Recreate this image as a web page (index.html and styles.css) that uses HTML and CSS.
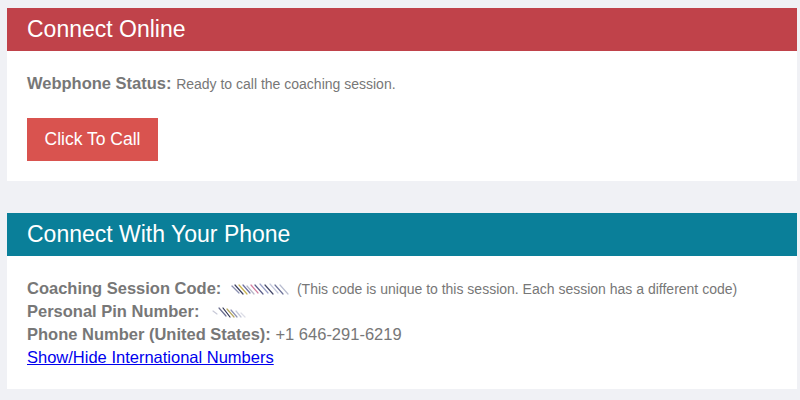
FILE: index.html
```html
<!DOCTYPE html>
<html>
<head>
<meta charset="utf-8">
<link rel="stylesheet" href="styles.css">
</head>
<body>
<div class="page">
  <section class="card">
    <h2 class="card-head head-red">Connect Online</h2>
    <div class="card-body">
      <div class="line"><span class="label">Webphone Status:</span> <span class="small">Ready to call the coaching session.</span></div>
      <button class="btn-call">Click To Call</button>
    </div>
  </section>
  <section class="card">
    <h2 class="card-head head-teal">Connect With Your Phone</h2>
    <div class="card-body">
      <div class="line"><span class="label">Coaching Session Code:</span>
        <svg class="redact code" width="62" height="14" viewBox="0 0 62 14">
          <g stroke-width="1.2" stroke-linecap="round">
            <line x1="2" y1="4" x2="9" y2="11" stroke="#8a8fb0"/>
            <line x1="5" y1="3" x2="13" y2="12" stroke="#3c3f60"/>
            <line x1="9" y1="3" x2="17" y2="12" stroke="#c9b450"/>
            <line x1="13" y1="3" x2="20" y2="11" stroke="#6b6fa0"/>
            <line x1="17" y1="4" x2="24" y2="12" stroke="#b7b7c8"/>
            <line x1="21" y1="3" x2="28" y2="11" stroke="#d37fa0"/>
            <line x1="25" y1="3" x2="33" y2="12" stroke="#5a5e8a"/>
            <line x1="30" y1="2" x2="38" y2="11" stroke="#9aa0c8"/>
            <line x1="35" y1="3" x2="43" y2="12" stroke="#44486a"/>
            <line x1="40" y1="2" x2="48" y2="11" stroke="#c4c8dc"/>
            <line x1="45" y1="3" x2="53" y2="12" stroke="#6e7399"/>
            <line x1="50" y1="3" x2="58" y2="12" stroke="#b9bdd0"/>
          </g>
        </svg><span class="small">(This code is unique to this session. Each session has a different code)</span></div>
      <div class="line"><span class="label">Personal Pin Number:</span>
        <svg class="redact pin" width="42" height="14" viewBox="0 0 42 14">
          <g stroke-width="1.2" stroke-linecap="round">
            <line x1="2" y1="6" x2="6" y2="9" stroke="#c8cad8"/>
            <line x1="8" y1="3" x2="15" y2="11" stroke="#6d7090"/>
            <line x1="12" y1="3" x2="19" y2="12" stroke="#2e3150"/>
            <line x1="16" y1="4" x2="23" y2="12" stroke="#b7a860"/>
            <line x1="20" y1="5" x2="26" y2="12" stroke="#8f93b4"/>
            <line x1="25" y1="6" x2="30" y2="12" stroke="#c5c8d8"/>
            <line x1="30" y1="8" x2="34" y2="12" stroke="#dcdde6"/>
          </g>
        </svg></div>
      <div class="line"><span class="label">Phone Number (United States):</span> <span class="value">+1 646-291-6219</span></div>
      <div class="line"><a class="link" href="#">Show/Hide International Numbers</a></div>
    </div>
  </section>
</div>
</body>
</html>
```
FILE: styles.css
```css
html, body {
  margin: 0;
  padding: 0;
  background: #f0f1f5;
}
body {
  font-family: "Liberation Sans", Arial, sans-serif;
  color: #777;
}
.page {
  padding: 8px 3px 0 7px;
  display: flex;
  flex-direction: column;
  gap: 32px;
}
.card {
  background: #fff;
}
.card-head {
  margin: 0;
  height: 43px;
  line-height: 43px;
  padding-left: 20px;
  font-size: 23px;
  font-weight: normal;
  color: #fff;
}
.head-red {
  background: #c0424a;
}
.head-teal {
  background: #0a7f99;
}
.card-body {
  padding: 21px 20px 20px;
  display: flex;
  flex-direction: column;
  align-items: flex-start;
}
.line {
  line-height: 22.7px;
  font-size: 16.5px;
  white-space: nowrap;
}
.label {
  font-weight: bold;
  color: #777;
}
.small {
  font-size: 14px;
  color: #777;
}
.value {
  color: #777;
}
.redact {
  vertical-align: -2px;
  margin: 0 5px 0 4px;
}
.pin {
  margin-left: 7px;
}
.btn-call {
  margin-top: 22px;
  height: 43px;
  width: 131px;
  padding: 0;
  border: none;
  background: #d9534f;
  color: #fff;
  font-family: "Liberation Sans", Arial, sans-serif;
  font-size: 17.5px;
}
.link {
  color: #0000ee;
  text-decoration: underline;
}
```
